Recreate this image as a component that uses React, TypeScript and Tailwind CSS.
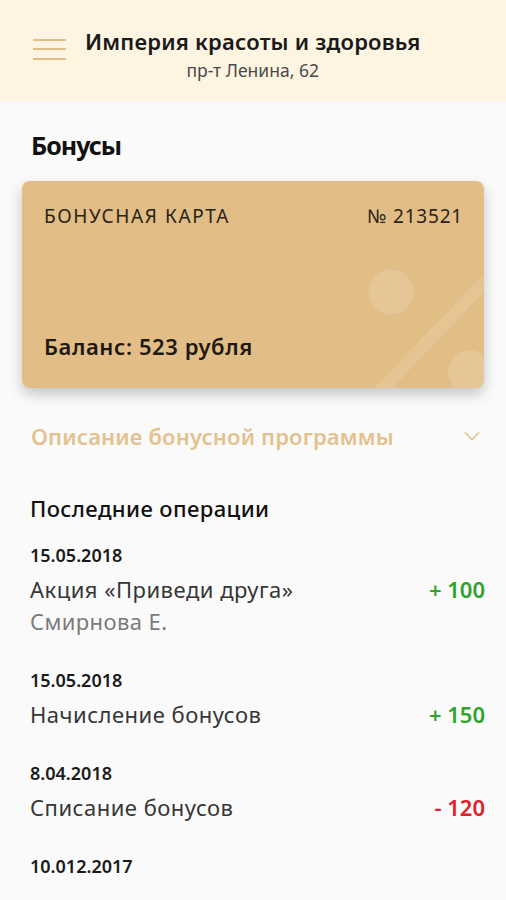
import React from 'react';

const font = { fontFamily: '"Noto Sans", "Open Sans", sans-serif' };

type Op = { date: string; title: string; sub?: string; amount: string; positive: boolean };

const ops: Op[] = [
  { date: '15.05.2018', title: 'Акция «Приведи друга»', sub: 'Смирнова Е.', amount: '+ 100', positive: true },
  { date: '15.05.2018', title: 'Начисление бонусов', amount: '+ 150', positive: true },
  { date: '8.04.2018', title: 'Списание бонусов', amount: '- 120', positive: false },
];

function Header() {
  return (
    <div className="flex h-[101px] items-start bg-[#fdf4e2] pl-[33px] pt-[27px]">
      <div className="mt-[11.5px] flex w-[33px] flex-col gap-[7.5px]">
        <div className="h-[2px] bg-[#e2bf88]" />
        <div className="h-[2px] bg-[#e2bf88]" />
        <div className="h-[2px] bg-[#e2bf88]" />
      </div>
      <div className="ml-[19px] flex flex-col items-center">
        <div className="text-[22px] font-semibold leading-[28px] tracking-[0.2px] text-[#1a1a1a]">Империя красоты и здоровья</div>
        <div className="mt-[4px] text-[17.5px] leading-[22px] text-[#4a4a4a]">пр-т Ленина, 62</div>
      </div>
    </div>
  );
}

function Card() {
  return (
    <div className="relative mx-[22px] mt-[20px] h-[207px] overflow-hidden rounded-[8px] bg-[#e2bd85] shadow-[0_6px_14px_rgba(0,0,0,0.22)]">
      <svg className="absolute inset-0" width="463" height="207" viewBox="0 0 463 207">
        <circle cx="369" cy="111" r="22.5" fill="#ffffff" fillOpacity="0.14" />
        <circle cx="448" cy="191" r="22" fill="#ffffff" fillOpacity="0.14" />
        <path d="M352 207 L463 92 L463 110 L370 207 Z" fill="#ffffff" fillOpacity="0.12" />
      </svg>
      <div className="relative flex h-full flex-col justify-between pb-[28px] pl-[22px] pr-[21px] pt-[23px]">
        <div className="flex justify-between text-[19px] leading-[24px] text-[#2a2418]">
          <span className="tracking-[1.6px]">БОНУСНАЯ КАРТА</span>
          <span className="tracking-[0.8px]">№ 213521</span>
        </div>
        <div className="text-[22px] font-semibold leading-[28px] tracking-[0.6px] text-[#1e1a12]">Баланс: 523 рубля</div>
      </div>
    </div>
  );
}

export default function App() {
  return (
    <div className="min-h-[900px] w-[506px] overflow-hidden bg-[#fafafa]" style={font}>
      <Header />
      <div className="px-[31px] pt-[28px] text-[25px] font-bold leading-[32px] tracking-[-1px] text-[#111]">Бонусы</div>
      <Card />
      <div className="mt-[33px] flex items-center justify-between pl-[31px] pr-[26px]">
        <span className="text-[22px] font-semibold leading-[30px] tracking-[0.15px] text-[#e4c28f]">Описание бонусной программы</span>
        <svg width="16" height="10" viewBox="0 0 16 10">
          <path d="M1 1.5 L8 8.5 L15 1.5" fill="none" stroke="#e4c28f" strokeWidth="1.6" />
        </svg>
      </div>
      <div className="px-[30px] pt-[42.5px] text-[22px] font-medium leading-[28px] tracking-[0.4px] text-[#111]">Последние операции</div>
      <div className="flex flex-col gap-[33px] pl-[30px] pr-[21px] pt-[21.5px]">
        {ops.map((op, i) => (
          <div key={i} className="flex flex-col">
            <div className="text-[18px] font-semibold leading-[24px] text-[#1a1a1a]">{op.date}</div>
            <div className="mt-[8px] flex items-center justify-between">
              <span className="text-[22px] leading-[28px] tracking-[0.5px] text-[#363636]">{op.title}</span>
              <span className={`text-[22px] font-semibold leading-[28px] ${op.positive ? 'text-[#2ea32e]' : 'text-[#e0202b]'}`}>
                {op.amount}
              </span>
            </div>
            {op.sub && <div className="mt-[4px] text-[22px] leading-[28px] tracking-[0.4px] text-[#7a7a7a]">{op.sub}</div>}
          </div>
        ))}
        <div className="text-[18px] font-semibold leading-[24px] text-[#1a1a1a]">10.012.2017</div>
      </div>
    </div>
  );
}
